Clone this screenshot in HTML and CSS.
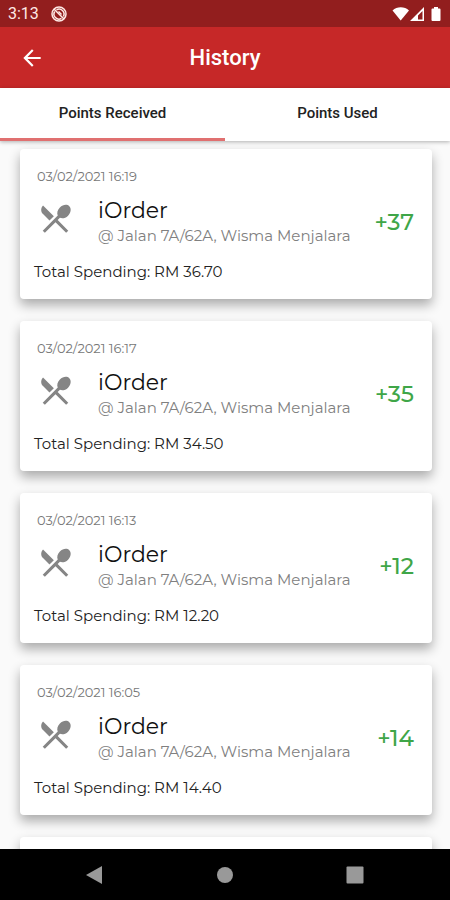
FILE: index.html
```html
<!DOCTYPE html>
<html lang="en">
<head>
<meta charset="utf-8">
<meta name="viewport" content="width=device-width, initial-scale=1">
<title>History</title>
<link rel="stylesheet" href="styles.css">
</head>
<body>
<svg class="defs" aria-hidden="true">
  <symbol id="restaurant" viewBox="0 0 24 24">
    <path d="M8.1 13.34l2.83-2.83L3.91 3.5c-1.56 1.56-1.56 4.09 0 5.66l4.19 4.18zm6.78-1.81c1.53.71 3.68.21 5.27-1.38 1.91-1.91 2.28-4.65.81-6.12-1.46-1.46-4.2-1.1-6.12.81-1.59 1.59-2.09 3.74-1.38 5.27L3.7 19.87l1.41 1.41L12 14.41l6.88 6.88 1.41-1.41L13.41 13l1.47-1.47z"/>
  </symbol>
</svg>
<div class="status">
  <span>3:13</span>
  <svg class="status-app" viewBox="0 0 16 16" aria-hidden="true">
    <circle cx="8" cy="8" r="7" fill="none" stroke="currentColor" stroke-width="1.5"/>
    <path d="M3 3l10 10" fill="none" stroke="currentColor" stroke-width="1.5"/>
    <path d="M5.500 3.800A5 5 0 0 1 12.400 10.500M3.700 5.500A5 5 0 0 0 10.500 12.400M7.500 5.500l3 3" fill="none" stroke="currentColor" stroke-width="1.5"/>
  </svg>
  <svg class="status-icons" viewBox="0 0 50 16" aria-hidden="true">
    <path d="M0.500 4.500C5 .2 12.500 .2 17 4.500L8.700 14.500z"/>
    <path fill-rule="evenodd" d="M18 15L32 1v14zM26 13.500h4.500V5l-4.500 4.500z"/>
    <path d="M42 1h4v1.500h1.500q1 0 1 1V14q0 1-1 1h-7q-1 0-1-1V3.500q0-1 1-1H42z"/>
  </svg>
</div>
<header class="bar">
  <button class="back" type="button" aria-label="Back">
    <svg viewBox="0 0 24 24" aria-hidden="true"><path d="M20 11H7.830l5.590-5.590L12 4l-8 8 8 8 1.410-1.410L7.830 13H20v-2z"/></svg>
  </button>
  <h1>History</h1>
</header>
<nav class="tabs">
  <button class="tab active" type="button">Points Received</button>
  <button class="tab" type="button">Points Used</button>
</nav>
<main class="list">
  <article class="card">
    <time>03/02/2021 16:19</time>
    <div class="row">
      <svg class="food" aria-hidden="true"><use href="#restaurant"/></svg>
      <div class="place"><h2>iOrder</h2><p>@ Jalan 7A/62A, Wisma Menjalara</p></div>
      <strong>+37</strong>
    </div>
    <p class="total">Total Spending: RM 36.70</p>
  </article>
  <article class="card">
    <time>03/02/2021 16:17</time>
    <div class="row">
      <svg class="food" aria-hidden="true"><use href="#restaurant"/></svg>
      <div class="place"><h2>iOrder</h2><p>@ Jalan 7A/62A, Wisma Menjalara</p></div>
      <strong>+35</strong>
    </div>
    <p class="total">Total Spending: RM 34.50</p>
  </article>
  <article class="card">
    <time>03/02/2021 16:13</time>
    <div class="row">
      <svg class="food" aria-hidden="true"><use href="#restaurant"/></svg>
      <div class="place"><h2>iOrder</h2><p>@ Jalan 7A/62A, Wisma Menjalara</p></div>
      <strong>+12</strong>
    </div>
    <p class="total">Total Spending: RM 12.20</p>
  </article>
  <article class="card">
    <time>03/02/2021 16:05</time>
    <div class="row">
      <svg class="food" aria-hidden="true"><use href="#restaurant"/></svg>
      <div class="place"><h2>iOrder</h2><p>@ Jalan 7A/62A, Wisma Menjalara</p></div>
      <strong>+14</strong>
    </div>
    <p class="total">Total Spending: RM 14.40</p>
  </article>
  <div class="card next"></div>
</main>
<footer class="system">
  <button type="button" aria-label="System back"><svg viewBox="0 0 20 20" aria-hidden="true"><path d="M17 1v18L1 10z"/></svg></button>
  <button type="button" aria-label="Home"><svg viewBox="0 0 20 20" aria-hidden="true"><circle cx="10" cy="10" r="8"/></svg></button>
  <button type="button" aria-label="Recent apps"><svg viewBox="0 0 20 20" aria-hidden="true"><rect x="1.500" y="1.500" width="17" height="17" rx="1"/></svg></button>
</footer>
</body>
</html>
```
FILE: styles.css
```css
* {
  box-sizing: border-box;
}

body {
  margin: 0;
  height: 100vh;
  display: flex;
  flex-direction: column;
  overflow: hidden;
  background: #fafafa;
  font-family: Montserrat, Inter, sans-serif;
}

h1, h2, p {
  margin: 0;
  font-weight: 400;
}

button {
  border: 0;
  padding: 0;
  background: none;
  font: inherit;
}

svg {
  display: block;
  fill: currentColor;
}

.defs {
  position: absolute;
  width: 0;
  height: 0;
}

.status {
  flex: none;
  display: flex;
  align-items: center;
  height: 27px;
  padding: 0 8px;
  background: #921e1e;
  color: #ffe9e6;
  font: 16px/20px Roboto, sans-serif;
}

.status-app {
  width: 16px;
  height: 16px;
  margin-left: 12px;
}

.status-icons {
  width: 50px;
  height: 16px;
  margin-left: auto;
  color: #fff;
}

.bar {
  flex: none;
  display: grid;
  grid-template-columns: 48px 1fr 48px;
  align-items: center;
  height: 61px;
  padding: 0 8px;
  background: #c62828;
  color: #fff;
}

.bar h1 {
  font: 500 22px/28px Roboto, sans-serif;
  text-align: center;
}

.back {
  color: inherit;
}

.back svg {
  width: 26px;
  height: 26px;
  margin: 0 auto;
}

.tabs {
  flex: none;
  display: flex;
  height: 53px;
  background: #fff;
  box-shadow: 0 1px 4px rgba(0, 0, 0, .3);
  z-index: 1;
}

.tab {
  flex: 1;
  border-bottom: 3px solid transparent;
  font: 500 15px/20px Roboto, sans-serif;
  color: #222;
}

.tab.active {
  border-color: #e07070;
}

.list {
  flex: 1;
  min-height: 0;
  display: flex;
  flex-direction: column;
  gap: 22px;
  overflow: hidden;
  padding: 8px 18px 0 20px;
}

.card {
  flex: none;
  padding: 17px 18px 17px 14px;
  border-radius: 4px;
  background: #fff;
  box-shadow: 0 6px 12px rgba(0, 0, 0, .32);
}

.card.next {
  height: 150px;
}

time {
  display: block;
  padding-left: 3px;
  font-size: 13px;
  line-height: 20px;
  color: #777;
}

.row {
  display: flex;
  align-items: center;
  padding: 11px 0 15px 3px;
}

.food {
  align-self: flex-start;
  width: 37px;
  height: 37px;
  margin-top: 3px;
  color: #858585;
}

.place {
  flex: 1;
  margin-left: 24px;
  white-space: nowrap;
}

.place h2 {
  font-size: 22px;
  line-height: 28px;
  color: #111;
}

.place p {
  font-size: 15px;
  line-height: 22px;
  color: #808080;
}

.row strong {
  font-size: 23px;
  line-height: 28px;
  font-weight: 500;
  color: #3fa648;
}

.total {
  font-size: 15px;
  line-height: 20px;
  color: #222;
}

.system {
  flex: none;
  display: flex;
  justify-content: center;
  align-items: center;
  gap: 110px;
  height: 51px;
  background: #000;
  color: #999;
  z-index: 1;
}

.system button {
  color: inherit;
}

.system svg {
  width: 20px;
  height: 20px;
}
```
